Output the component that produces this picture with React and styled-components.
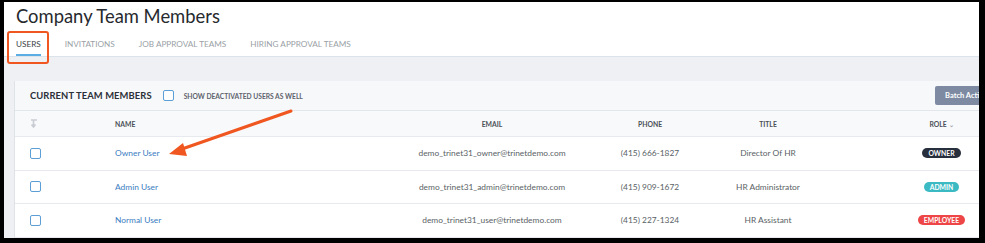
import React from "react"
import styled, { createGlobalStyle } from "styled-components"

const GlobalStyle = createGlobalStyle`
  html, body {
    margin: 0;
    padding: 0;
    background: #ffffff;
  }
  body {
    font-family: Lato, "Open Sans", "Liberation Sans", sans-serif;
  }
`

const Frame = styled.div`
  position: relative;
  width: 985px;
  height: 243px;
  box-sizing: border-box;
  border-style: solid;
  border-color: #000;
  border-width: 2px 6px 5px 4px;
  overflow: hidden;
  background: #eef0f3;
`

const Header = styled.header`
  background: #fff;
  padding-left: 12px;
  border-bottom: 1px solid #dde3ea;
`

const Title = styled.h1`
  margin: 0;
  padding-top: 2px;
  font-size: 18.4px;
  line-height: 24px;
  font-weight: 400;
  color: #26292e;
`

const Tabs = styled.nav`
  display: flex;
  gap: 24px;
`

const Tab = styled.div`
  padding: 11px 0 5px;
  font-size: 8.2px;
  line-height: 10px;
  text-transform: uppercase;
  color: ${(p) => (p.$active ? "#3b3f46" : "#9a9fa6")};
  border-bottom: 2px solid ${(p) => (p.$active ? "#5aaee3" : "transparent")};
`

const Body = styled.main`
  padding: 24px 0 0 10px;
`

const Panel = styled.section`
  width: 1040px;
  background: #fff;
  border-left: 1px solid #dfe3e8;
`

const PanelHeader = styled.div`
  display: flex;
  align-items: center;
  height: 29px;
  padding: 0 0 0 15px;
  background: #f7f8fa;
  border-bottom: 1px solid #e3e7ec;
`

const PanelTitle = styled.h2`
  margin: 0 11px 0 0;
  font-size: 9.4px;
  font-weight: 700;
  letter-spacing: 0.1px;
  color: #2a2f38;
`

const Check = styled.span`
  display: inline-block;
  width: 11px;
  height: 11px;
  box-sizing: border-box;
  border: 1.5px solid #5b9fd6;
  border-radius: 2px;
  background: #fff;
`

const CheckLabel = styled.span`
  margin-left: 10px;
  font-size: 6.7px;
  font-weight: 700;
  color: #5d636c;
  text-transform: uppercase;
`

const BatchButton = styled.button`
  margin-left: auto;
  margin-right: 25px;
  width: 95px;
  height: 19px;
  padding: 0 0 0 10px;
  border: 0;
  border-radius: 2px;
  background: #7d8aa2;
  color: #fff;
  font-family: inherit;
  font-size: 7.5px;
  font-weight: 700;
  text-align: left;
`

const Row = styled.div`
  display: grid;
  grid-template-columns: 100px 277px 200px 116px 120px 227px;
  align-items: center;
  height: ${(p) => (p.$head ? "26px" : "33.5px")};
  box-sizing: border-box;
  background: ${(p) => (p.$head ? "#f8f9fb" : "#fff")};
  border-bottom: 1px solid #e6eaef;
  font-size: ${(p) => (p.$head ? "6.8px" : "8.4px")};
  font-weight: ${(p) => (p.$head ? 700 : 400)};
  color: ${(p) => (p.$head ? "#4a4f57" : "#5a5f66")};
`

const Cell = styled.div`
  text-align: ${(p) => (p.$left ? "left" : "center")};
  padding-left: ${(p) => (p.$pad ? "15px" : "0")};
  display: ${(p) => (p.$pad ? "flex" : "block")};
`

const NameLink = styled.span`
  color: #3b7dc2;
  cursor: pointer;
`

const Badge = styled.span`
  display: inline-block;
  padding: 0 6px;
  height: 10px;
  line-height: 10px;
  border-radius: 5px;
  font-size: 6.8px;
  font-weight: 700;
  color: #fff;
  background: ${(p) => p.$color};
`

const Chevron = styled.span`
  margin-left: 2px;
  color: #a0a5ad;
  font-size: 6px;
`

const Callout = styled.div`
  position: absolute;
  left: 3px;
  top: 29px;
  width: 42px;
  height: 33px;
  box-sizing: border-box;
  border: 2.5px solid #f0561f;
  border-radius: 3px;
`

const Arrow = styled.svg`
  position: absolute;
  left: 0;
  top: 0;
  pointer-events: none;
`

const SortIcon = () => (
  <svg width="8" height="9" viewBox="0 0 8 9">
    <path d="M1 1h6M3.5 1v7M1.5 5.5l2 2.5 2-2.5" stroke="#c9cdd3" strokeWidth="1.6" fill="none" />
  </svg>
)

const members = [
  { name: "Owner User", email: "demo_trinet31_owner@trinetdemo.com", phone: "(415) 666-1827", title: "Director Of HR", role: "OWNER", color: "#272e3c" },
  { name: "Admin User", email: "demo_trinet31_admin@trinetdemo.com", phone: "(415) 909-1672", title: "HR Administrator", role: "ADMIN", color: "#3cbac3" },
  { name: "Normal User", email: "demo_trinet31_user@trinetdemo.com", phone: "(415) 227-1324", title: "HR Assistant", role: "EMPLOYEE", color: "#ee4646" },
]

export default function App() {
  return (
    <>
      <GlobalStyle />
      <Frame>
        <Header>
          <Title>Company Team Members</Title>
          <Tabs>
            <Tab $active>Users</Tab>
            <Tab>Invitations</Tab>
            <Tab>Job Approval Teams</Tab>
            <Tab>Hiring Approval Teams</Tab>
          </Tabs>
        </Header>
        <Body>
          <Panel>
            <PanelHeader>
              <PanelTitle>CURRENT TEAM MEMBERS</PanelTitle>
              <Check />
              <CheckLabel>Show deactivated users as well</CheckLabel>
              <BatchButton>Batch Actions</BatchButton>
            </PanelHeader>
            <Row $head>
              <Cell $pad><SortIcon /></Cell>
              <Cell $left>NAME</Cell>
              <Cell>EMAIL</Cell>
              <Cell>PHONE</Cell>
              <Cell>TITLE</Cell>
              <Cell>ROLE<Chevron>&#8964;</Chevron></Cell>
            </Row>
            {members.map((m) => (
              <Row key={m.email}>
                <Cell $pad><Check /></Cell>
                <Cell $left><NameLink>{m.name}</NameLink></Cell>
                <Cell>{m.email}</Cell>
                <Cell>{m.phone}</Cell>
                <Cell>{m.title}</Cell>
                <Cell><Badge $color={m.color}>{m.role}</Badge></Cell>
              </Row>
            ))}
          </Panel>
        </Body>
        <Callout />
        <Arrow width="985" height="243" viewBox="0 0 985 243">
          <line x1="287" y1="109" x2="178" y2="147" stroke="#f0561f" strokeWidth="3" strokeLinecap="round" />
          <polygon points="165,152 179,141 183,154" fill="#f0561f" />
        </Arrow>
      </Frame>
    </>
  )
}
